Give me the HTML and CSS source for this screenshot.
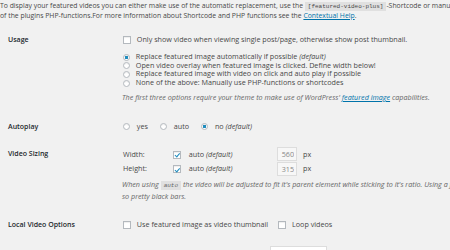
FILE: index.html
```html
<!DOCTYPE html>
<html lang="en">

<head>
    <meta charset="UTF-8">
    <meta name="viewport" content="width=device-width, initial-scale=1.0">
    <title>Featured Video Plus Settings</title>
    <link rel="stylesheet" href="styles.css">
</head>

<body>

    <div class="wrap">
        <!-- Intro -->
        <p class="intro">To display your featured videos you can either make use of the automatic replacement, use the <code>[featured-video-plus]</code>-Shortcode or manually insert it with one<br>of the plugins PHP-functions.For more information about Shortcode and PHP functions see the <a href="#">Contextual Help</a>.</p>

        <div class="form">
            <!-- Usage -->
            <div class="row usage">
                <div class="label">Usage</div>
                <div class="field">
                    <label><input type="checkbox" class="cb"> Only show video when viewing single post/page, otherwise show post thumbnail.</label>
                    <div class="radios">
                        <label><input type="radio" class="rb" name="usage" checked> Replace featured image automatically if possible <i>(default)</i></label>
                        <label><input type="radio" class="rb" name="usage"> Open video overlay when featured image is clicked. Define width below!</label>
                        <label><input type="radio" class="rb" name="usage"> Replace featured image with video on click and auto play if possible</label>
                        <label><input type="radio" class="rb" name="usage"> None of the above: Manually use PHP-functions or shortcodes</label>
                    </div>
                    <p class="desc">The first three options require your theme to make use of WordPress' <a href="#">featured image</a> capabilities.</p>
                </div>
            </div>

            <!-- Autoplay -->
            <div class="row autoplay">
                <div class="label">Autoplay</div>
                <div class="field inline">
                    <label><input type="radio" class="rb" name="autoplay"> yes</label>
                    <label><input type="radio" class="rb" name="autoplay"> auto</label>
                    <label><input type="radio" class="rb" name="autoplay" checked> no <i>(default)</i></label>
                </div>
            </div>

            <!-- Video Sizing -->
            <div class="row sizes">
                <div class="label">Video Sizing</div>
                <div class="field sizing">
                    <div class="size">
                        <span>Width:</span>
                        <label><input type="checkbox" class="cb" checked> auto <i>(default)</i></label>
                        <input type="text" class="num" value="560" readonly>
                        <span>px</span>
                    </div>
                    <div class="size">
                        <span>Height:</span>
                        <label><input type="checkbox" class="cb" checked> auto <i>(default)</i></label>
                        <input type="text" class="num" value="315" readonly>
                        <span>px</span>
                    </div>
                    <p class="desc note">When using <code>auto</code> the video will be adjusted to fit it's parent element while sticking to it's ratio. Using a fixed height and width might result in not<br>so pretty black bars.</p>
                </div>
            </div>

            <!-- Local Video Options -->
            <div class="row">
                <div class="label">Local Video Options</div>
                <div class="field local">
                    <label><input type="checkbox" class="cb"> Use featured image as video thumbnail</label>
                    <label><input type="checkbox" class="cb"> Loop videos</label>
                </div>
            </div>

            <div class="row next">
                <div class="label"></div>
                <div class="field">
                    <div class="box"></div>
                </div>
            </div>
        </div>
    </div>

</body>

</html>
```

FILE: styles.css
```css
html,
body {
    overflow: hidden;
}

body {
    margin: 0;
    background-color: #f1f1f1;
    font-family: "Open Sans", sans-serif;
    font-size: 6.85px;
    line-height: 9px;
    color: #484848;
}

.wrap {
    width: 800px;
}

a {
    color: #0073aa;
    text-decoration: underline;
}

code {
    font-family: "Liberation Mono", monospace;
    font-size: 6px;
    background: rgba(0, 0, 0, 0.07);
    padding: 1px 3px;
}

.intro {
    margin: 0 0 5px;
    padding-top: 1px;
}

.row {
    display: grid;
    grid-template-columns: 122px 1fr;
    padding: 10px 0;
}

.label {
    padding-left: 8px;
    font-size: 7px;
    font-weight: 600;
    color: #23282d;
}

.field {
    font-size: 7.2px;
}

.field label {
    display: block;
}

.radios {
    margin-top: 8px;
    line-height: 8.7px;
}

.desc {
    margin: 6px 0 0;
    font-style: italic;
    color: #666;
}

/* checkboxes and radios */
.cb,
.rb {
    -webkit-appearance: none;
    appearance: none;
    box-sizing: border-box;
    margin: 0 4px 0 1px;
    border: 1px solid #b4b9be;
    background: #fff;
    box-shadow: inset 0 1px 1px rgba(0, 0, 0, 0.07);
    vertical-align: middle;
    position: relative;
}

.cb {
    width: 8px;
    height: 8px;
}

.cb:checked::before {
    content: "";
    position: absolute;
    left: 2.2px;
    top: 0.6px;
    width: 1.6px;
    height: 3.6px;
    border: solid #1e8cbe;
    border-width: 0 1.2px 1.2px 0;
    transform: rotate(40deg);
}

.rb {
    width: 7px;
    height: 7px;
    border-radius: 50%;
}

.rb:checked {
    background: radial-gradient(circle, #1e8cbe 0 1.4px, #fff 1.9px);
}

.inline {
    display: flex;
}

.inline label {
    margin-right: 11px;
}

.inline .rb {
    margin-right: 5px;
}

.row.autoplay {
    padding-bottom: 9px;
}

/* video sizing */
.row.sizes {
    padding-top: 9px;
    padding-bottom: 9px;
}

.sizing {
    margin-top: -2px;
}

.size {
    display: grid;
    grid-template-columns: 50px 105px 20px auto;
    align-items: center;
    height: 14.5px;
}

.size span:first-child {
    padding-left: 1px;
}

.size .cb {
    margin-right: 6px;
}

.size span:last-child {
    padding-left: 6px;
}

.num {
    box-sizing: border-box;
    width: 20px;
    height: 14px;
    margin: 0;
    padding: 0 2px;
    border: 1px solid #ddd;
    background: #f7f7f7;
    color: #888;
    font: inherit;
    text-align: right;
}

.note {
    margin-top: 3px;
    line-height: 10px;
}

/* local video options */
.local {
    display: flex;
}

.local label {
    margin-right: 9px;
}

.row.next {
    padding-top: 7px;
}

.box {
    margin-left: 148px;
    width: 55px;
    height: 14px;
    background: #fff;
    border: 1px solid #ddd;
}
```
